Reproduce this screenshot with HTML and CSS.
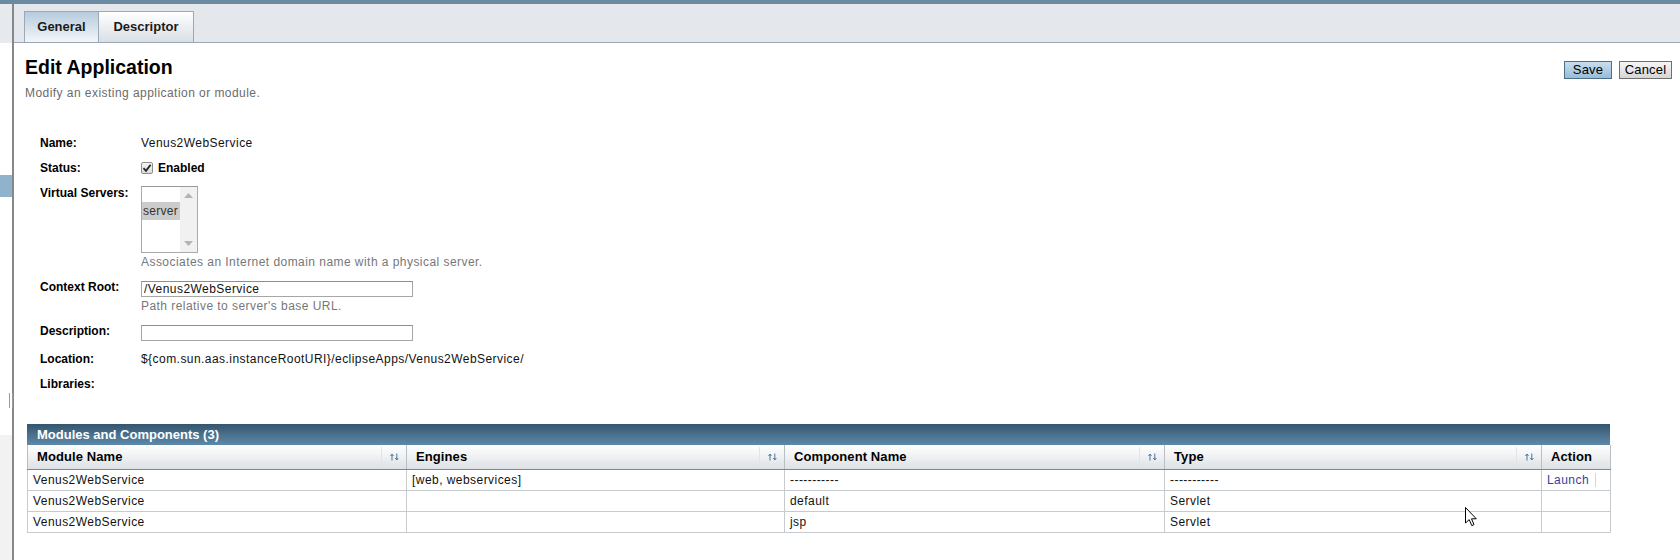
FILE: index.html
```html
<!DOCTYPE html>
<html lang="en">
<head>
	<meta charset="UTF-8">
	<title>Edit Application</title>
	<link rel="stylesheet" href="styles.css">
</head>
<body>
<div class="topband"></div>
<div class="frame">
	<div class="sidebar">
		<div class="side-top"></div>
		<div class="side-gap"></div>
		<div class="side-sel"></div>
		<div class="side-gap2"><span class="grip"></span></div>
		<div class="side-bottom"></div>
	</div>
	<div class="main">
		<div class="tabbar">
			<div class="tab active">General</div>
			<div class="tab">Descriptor</div>
		</div>
		<div class="content">
			<div class="page-head">
				<div class="page-title">
					<h1>Edit Application</h1>
					<p class="subtitle">Modify an existing application or module.</p>
				</div>
				<div class="buttons">
					<button class="btn primary">Save</button>
					<button class="btn">Cancel</button>
				</div>
			</div>

			<div class="form">
				<div class="field">
					<div class="label">Name:</div>
					<div class="value">Venus2WebService</div>
				</div>
				<div class="field">
					<div class="label">Status:</div>
					<div class="value check">
						<span class="checkbox">
							<svg width="10" height="10" viewBox="0 0 10 10"><path d="M1.5 5.2 L4 7.8 L8.6 1.8" fill="none" stroke="#222" stroke-width="1.8"/></svg>
						</span>
						<b>Enabled</b>
					</div>
				</div>
				<div class="field">
					<div class="label">Virtual Servers:</div>
					<div class="value">
						<div class="listbox">
							<div class="list-items">
								<div class="list-item selected">server</div>
							</div>
							<div class="list-scroll">
								<svg width="9" height="5" viewBox="0 0 9 5"><polygon points="0,5 4.5,0 9,5" fill="#b4b4b4"/></svg>
								<svg width="9" height="5" viewBox="0 0 9 5"><polygon points="0,0 4.5,5 9,0" fill="#b4b4b4"/></svg>
							</div>
						</div>
						<div class="hint">Associates an Internet domain name with a physical server.</div>
					</div>
				</div>
				<div class="field">
					<div class="label">Context Root:</div>
					<div class="value">
						<input class="text-input" type="text" value="/Venus2WebService">
						<div class="hint">Path relative to server's base URL.</div>
					</div>
				</div>
				<div class="field">
					<div class="label">Description:</div>
					<div class="value">
						<input class="text-input" type="text" value="">
					</div>
				</div>
				<div class="field">
					<div class="label">Location:</div>
					<div class="value">${com.sun.aas.instanceRootURI}/eclipseApps/Venus2WebService/</div>
				</div>
				<div class="field">
					<div class="label">Libraries:</div>
					<div class="value"></div>
				</div>
			</div>

			<div class="grid-wrap">
				<div class="grid-title">Modules and Components (3)</div>
				<table class="grid">
					<colgroup>
						<col class="c-module">
						<col class="c-engines">
						<col class="c-comp">
						<col class="c-type">
						<col class="c-action">
					</colgroup>
					<thead>
						<tr>
							<th><div class="th-in"><span>Module Name</span><span class="sort"><svg width="9" height="8" viewBox="0 0 9 8"><path d="M2 7.5 V1.5 M0.5 3 L2 1 L3.5 3 M6.8 0.5 V6.5 M5.3 5 L6.8 7 L8.3 5" fill="none" stroke="#4f739a" stroke-width="1"/></svg></span></div></th>
							<th><div class="th-in"><span>Engines</span><span class="sort"><svg width="9" height="8" viewBox="0 0 9 8"><path d="M2 7.5 V1.5 M0.5 3 L2 1 L3.5 3 M6.8 0.5 V6.5 M5.3 5 L6.8 7 L8.3 5" fill="none" stroke="#4f739a" stroke-width="1"/></svg></span></div></th>
							<th><div class="th-in"><span>Component Name</span><span class="sort"><svg width="9" height="8" viewBox="0 0 9 8"><path d="M2 7.5 V1.5 M0.5 3 L2 1 L3.5 3 M6.8 0.5 V6.5 M5.3 5 L6.8 7 L8.3 5" fill="none" stroke="#4f739a" stroke-width="1"/></svg></span></div></th>
							<th><div class="th-in"><span>Type</span><span class="sort"><svg width="9" height="8" viewBox="0 0 9 8"><path d="M2 7.5 V1.5 M0.5 3 L2 1 L3.5 3 M6.8 0.5 V6.5 M5.3 5 L6.8 7 L8.3 5" fill="none" stroke="#4f739a" stroke-width="1"/></svg></span></div></th>
							<th><div class="th-in"><span>Action</span></div></th>
						</tr>
					</thead>
					<tbody>
						<tr>
							<td>Venus2WebService</td>
							<td>[web, webservices]</td>
							<td>-----------</td>
							<td>-----------</td>
							<td><a class="link" href="#">Launch</a><span class="link-sep"></span></td>
						</tr>
						<tr>
							<td>Venus2WebService</td>
							<td></td>
							<td>default</td>
							<td>Servlet</td>
							<td></td>
						</tr>
						<tr>
							<td>Venus2WebService</td>
							<td></td>
							<td>jsp</td>
							<td>Servlet</td>
							<td></td>
						</tr>
					</tbody>
				</table>
			</div>
		</div>
	</div>
</div>
<svg class="cursor" width="12" height="20" viewBox="0 0 12 20"><path d="M0.5 0.5 V16 L4.2 12.6 L6.8 18.6 L9 17.6 L6.5 11.8 L11.3 11.8 Z" fill="#fff" stroke="#000" stroke-width="1"/></svg>
</body>
</html>
```

FILE: styles.css
```css
* {
	box-sizing: border-box;
}

html, body {
	margin: 0;
	padding: 0;
}

body {
	position: relative;
	width: 1680px;
	height: 560px;
	overflow: hidden;
	font-family: "Liberation Sans", Arial, sans-serif;
	font-size: 12px;
	letter-spacing: 0.45px;
	color: #1a1a1a;
	background: #fff;
}

.topband {
	height: 4px;
	background-color: #6b8aa2;
}

.frame {
	display: flex;
	height: 556px;
}

/* left navigation strip */
.sidebar {
	display: flex;
	flex-direction: column;
	width: 14px;
	border-right: 2px solid #888;
}

.side-top {
	height: 39px;
	background-color: #e6e9ed;
}

.side-gap {
	height: 132px;
}

.side-sel {
	height: 22px;
	background-color: #8fb3cc;
}

.side-gap2 {
	position: relative;
	height: 238px;
}

.grip {
	position: absolute;
	top: 196px;
	left: 9px;
	width: 4px;
	height: 15px;
	border-left: 1px solid #9a9a9a;
	border-right: 1px solid #9a9a9a;
	background: #fff;
}

.side-bottom {
	flex: 1;
	background-color: #f2f2f2;
}

.main {
	flex: 1;
	min-width: 0;
}

/* tabs */
.tabbar {
	display: flex;
	height: 39px;
	padding: 7px 0 0 10px;
	background-color: #e4e7eb;
	border-bottom: 1px solid #9aa6b1;
}

.tab {
	height: 31px;
	line-height: 30px;
	text-align: center;
	font-size: 13px;
	font-weight: bold;
	letter-spacing: 0;
	color: #1a1a1a;
	border: 1px solid #9ca9b4;
	border-bottom: none;
	background: linear-gradient(#ffffff, #d9dfe5);
}

.tab:first-child {
	width: 75px;
}

.tab + .tab {
	width: 95px;
	border-left: none;
}

.tab.active {
	background: linear-gradient(#b6cbdd, #f3f6f9);
}

.content {
	padding: 0 8px 0 11px;
}

/* page header */
.page-head {
	display: flex;
	justify-content: space-between;
	align-items: flex-start;
	margin-top: 12px;
}

.page-head h1 {
	margin: 0;
	font-size: 19.5px;
	line-height: 24px;
	letter-spacing: 0;
	color: #000;
}

.subtitle {
	margin: 7px 0 0 0;
	line-height: 14px;
	color: #6b6b6b;
}

.buttons {
	display: flex;
	gap: 7px;
	margin-top: 6px;
}

.btn {
	width: 53px;
	height: 18px;
	padding: 0;
	font-family: "Liberation Sans", Arial, sans-serif;
	font-size: 13px;
	line-height: 16px;
	letter-spacing: 0.2px;
	color: #000;
	border: 1px solid #6f6f6f;
	border-radius: 0;
	background: linear-gradient(#f6f6f6, #d6d6d6);
}

.btn.primary {
	width: 48px;
	border-color: #4f6f88;
	background: linear-gradient(#c9deee, #98bcd8);
}

/* form */
.form {
	display: flex;
	flex-direction: column;
	gap: 11px;
	margin-top: 36px;
	padding-left: 15px;
}

.field {
	display: grid;
	grid-template-columns: 101px 1fr;
	align-items: start;
}

.label {
	line-height: 14px;
	font-weight: bold;
	letter-spacing: 0;
	color: #000;
}

.value {
	line-height: 14px;
	color: #111;
}

.check {
	display: flex;
	align-items: center;
	gap: 5px;
}

.check b {
	letter-spacing: 0;
	color: #000;
}

.checkbox {
	display: flex;
	align-items: center;
	justify-content: center;
	width: 12px;
	height: 12px;
	border: 1px solid #8e8e8e;
	border-radius: 2px;
	background: linear-gradient(#f4f4f4, #dcdcdc);
}

.listbox {
	display: flex;
	width: 57px;
	height: 67px;
	border: 1px solid #ababab;
	border-top-color: #9a9a9a;
	background: #fff;
}

.list-items {
	flex: 1;
	padding-top: 15px;
}

.list-item {
	height: 18px;
	line-height: 18px;
	padding-left: 1px;
	letter-spacing: 0.3px;
	color: #333;
}

.list-item.selected {
	background-color: #cccccc;
}

.list-scroll {
	display: flex;
	flex-direction: column;
	justify-content: space-between;
	align-items: center;
	width: 17px;
	padding: 6px 0 6px 0;
	background-color: #f1f1f1;
}

.hint {
	margin-top: 2px;
	line-height: 14px;
	color: #777;
}

.text-input {
	display: block;
	width: 272px;
	height: 16px;
	margin: 1px 0 0 0;
	padding: 0 2px;
	font-family: "Liberation Sans", Arial, sans-serif;
	font-size: 12px;
	letter-spacing: 0.45px;
	color: #111;
	border: 1px solid #a6a6a6;
	border-top-color: #8e8e8e;
	outline: none;
}

/* table */
.grid-wrap {
	width: 1583px;
	margin: 33px 0 0 2px;
}

.grid-title {
	height: 21px;
	line-height: 21px;
	padding-left: 10px;
	font-size: 13px;
	font-weight: bold;
	letter-spacing: 0;
	color: #fff;
	background: linear-gradient(#33566f, #5e89a9);
}

.grid {
	width: 1583px;
	table-layout: fixed;
	border-collapse: collapse;
}

.c-module { width: 379px; }
.c-engines { width: 378px; }
.c-comp { width: 380px; }
.c-type { width: 377px; }
.c-action { width: 69px; }

.grid th {
	height: 24px;
	padding: 0;
	text-align: left;
	font-size: 13px;
	letter-spacing: 0.1px;
	color: #000;
	border: 1px solid #b7bec5;
	border-top: none;
	border-bottom: 1px solid #7b8996;
	background: linear-gradient(#ffffff, #dde1e5);
}

.th-in {
	display: flex;
	justify-content: space-between;
	align-items: stretch;
	height: 23px;
	padding-left: 9px;
}

.th-in span:first-child {
	line-height: 23px;
}

.sort {
	display: flex;
	align-items: center;
	justify-content: center;
	width: 25px;
	margin: 2px 0;
	border-left: 1px solid #e2e5e8;
}

.grid td {
	height: 21px;
	padding: 0 0 0 5px;
	line-height: 20px;
	white-space: nowrap;
	color: #111;
	border: 1px solid #c6cbd0;
}

.link {
	color: #3a3ea0;
	text-decoration: none;
}

.link-sep {
	display: inline-block;
	width: 1px;
	height: 14px;
	margin-left: 6px;
	vertical-align: middle;
	background-color: #d4d4d4;
}

.cursor {
	position: absolute;
	left: 1465px;
	top: 507px;
}
```
